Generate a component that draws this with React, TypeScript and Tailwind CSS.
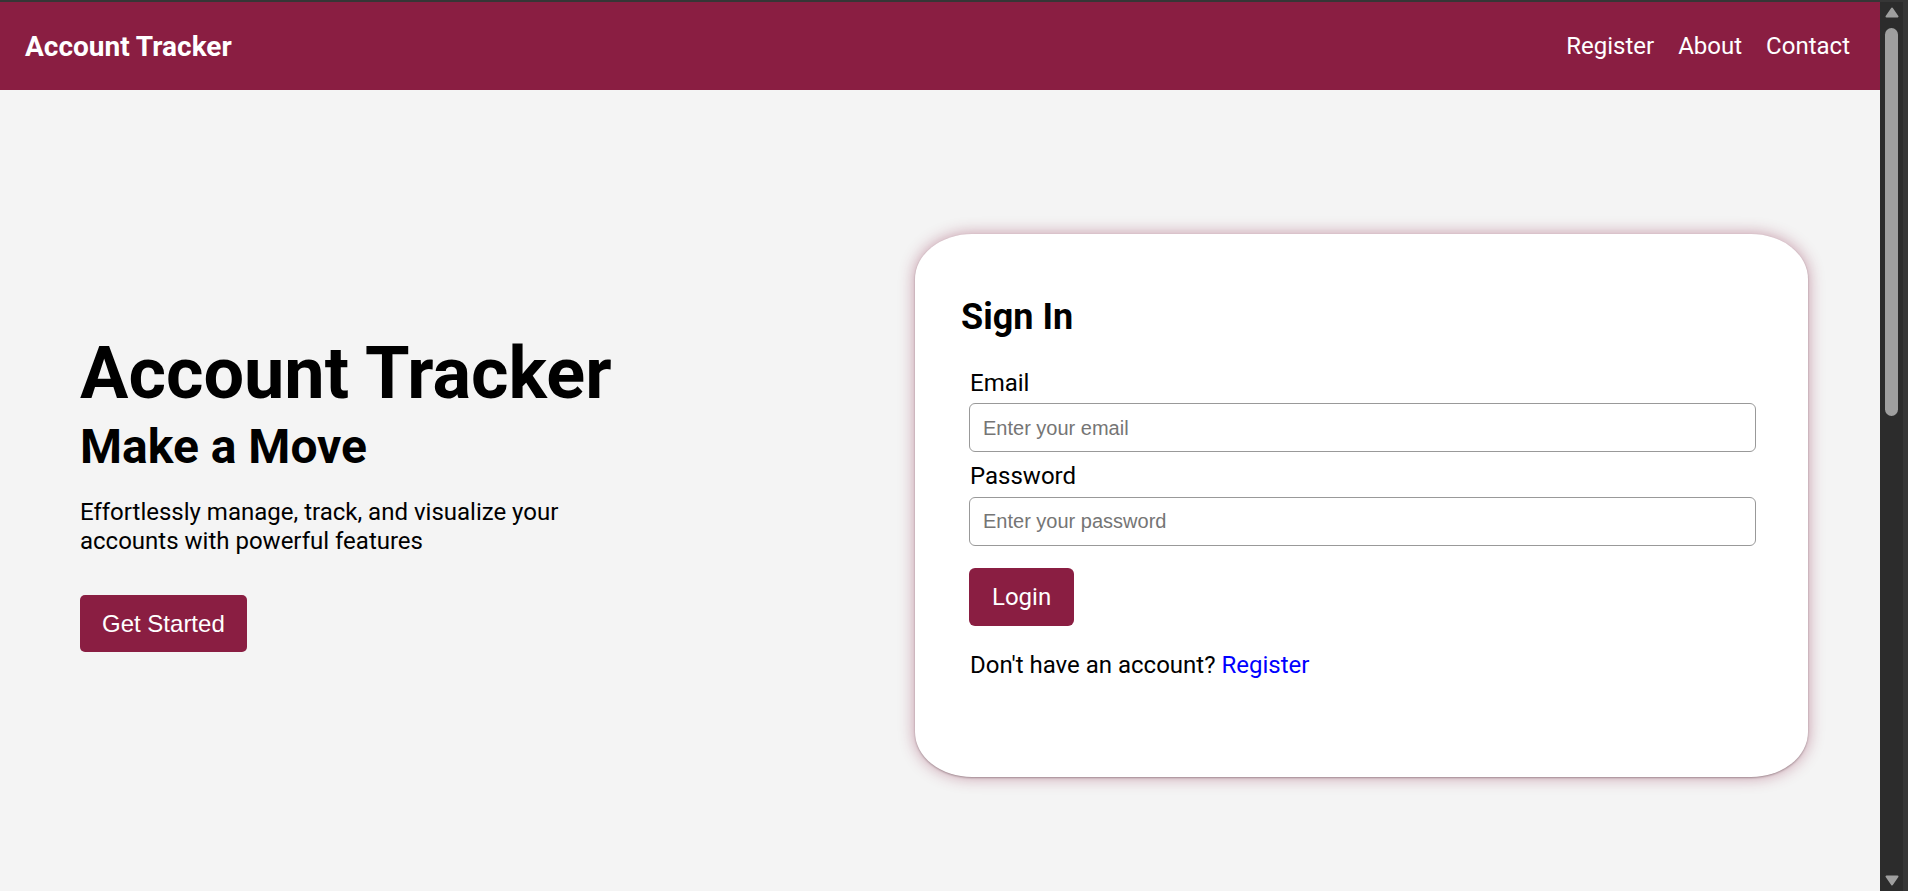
function Arrow({ down }: { down?: boolean }) {
  return (
    <svg width="14" height="11" viewBox="0 0 14 11" className="shrink-0">
      <path
        d={down ? "M1.5 1.5 L12.5 1.5 L7 9.5 Z" : "M7 1.5 L12.5 9.5 L1.5 9.5 Z"}
        fill="#9f9f9f"
        stroke="#9f9f9f"
        strokeWidth="2"
        strokeLinejoin="round"
      />
    </svg>
  );
}

export default function App() {
  return (
    <div className="flex h-[891px] overflow-hidden border-t-2 border-r-[5px] border-[#363636] bg-[#363636]">
      <div className="h-full min-w-0 flex-1 overflow-hidden bg-[#f4f4f4] font-['Roboto',sans-serif] text-black">
        <header className="flex h-[88px] items-center justify-between bg-[#8a1e42] pl-[25px] pr-[30px] text-white">
          <h1 className="text-[28px] font-bold leading-[33px]">Account Tracker</h1>
          <nav className="flex gap-[24px] text-[24px] leading-[28px]">
            <a href="#">Register</a>
            <a href="#">About</a>
            <a href="#">Contact</a>
          </nav>
        </header>

        <main className="flex min-h-[1830px] items-start pl-[80px] pr-[72px] pt-[144px]">
          <section className="flex-1 pt-[98px]">
            <h2 className="text-[72px] font-bold leading-[84px]">Account Tracker</h2>
            <h3 className="mt-[2px] text-[48px] font-bold leading-[57px]">Make a Move</h3>
            <p className="mt-[23px] max-w-[520px] text-[24px] leading-[29px]">
              Effortlessly manage, track, and visualize your accounts with powerful features
            </p>
            <button className="mt-[39px] h-[57px] rounded-[5px] bg-[#8a1e42] px-[22px] font-['Liberation_Sans',Arial,sans-serif] text-[24px] text-white">
              Get Started
            </button>
          </section>

          <div className="h-[543px] w-[893px] rounded-[57px/45px] bg-white pl-[46px] pt-[62px] shadow-[0_0_16px_rgba(138,30,66,0.45),0_1px_2px_rgba(0,0,0,0.3)]">
            <h2 className="text-[36px] font-bold leading-[42px]">Sign In</h2>
            <form className="ml-[8px] mt-[31px] w-[787px]" onSubmit={(e) => e.preventDefault()}>
              <label htmlFor="email" className="block pl-[1px] text-[24px] leading-[28px]">
                Email
              </label>
              <input
                id="email"
                type="email"
                placeholder="Enter your email"
                className="mt-[6px] block h-[49px] w-full rounded-[6px] border border-[#999] bg-white pl-[13px] pt-[1px] font-['Liberation_Sans',Arial,sans-serif] text-[20px] placeholder:text-[#757575]"
              />
              <label htmlFor="password" className="mt-[10px] block pl-[1px] text-[24px] leading-[28px]">
                Password
              </label>
              <input
                id="password"
                type="password"
                placeholder="Enter your password"
                className="mt-[7px] block h-[49px] w-full rounded-[6px] border border-[#999] bg-white pl-[13px] font-['Liberation_Sans',Arial,sans-serif] text-[20px] placeholder:text-[#757575]"
              />
              <button
                type="submit"
                className="mt-[22px] h-[58px] rounded-[6px] bg-[#8a1e42] px-[23px] text-[24px] text-white"
              >
                Login
              </button>
              <p className="mt-[25px] pl-[1px] text-[24px] leading-[28px]">
                Don't have an account?{" "}
                <a href="#" className="text-[#0000ff]">
                  Register
                </a>
              </p>
            </form>
          </div>
        </main>
      </div>

      {/* scrollbar */}
      <div className="flex h-full w-[23px] shrink-0 flex-col items-center bg-[#2c2c2c] pb-[5px] pt-[5px]">
        <Arrow />
        <div className="mt-[10px] h-[388px] w-[13px] rounded-full bg-[#9f9f9f]" />
        <div className="mt-auto">
          <Arrow down />
        </div>
      </div>
    </div>
  );
}
